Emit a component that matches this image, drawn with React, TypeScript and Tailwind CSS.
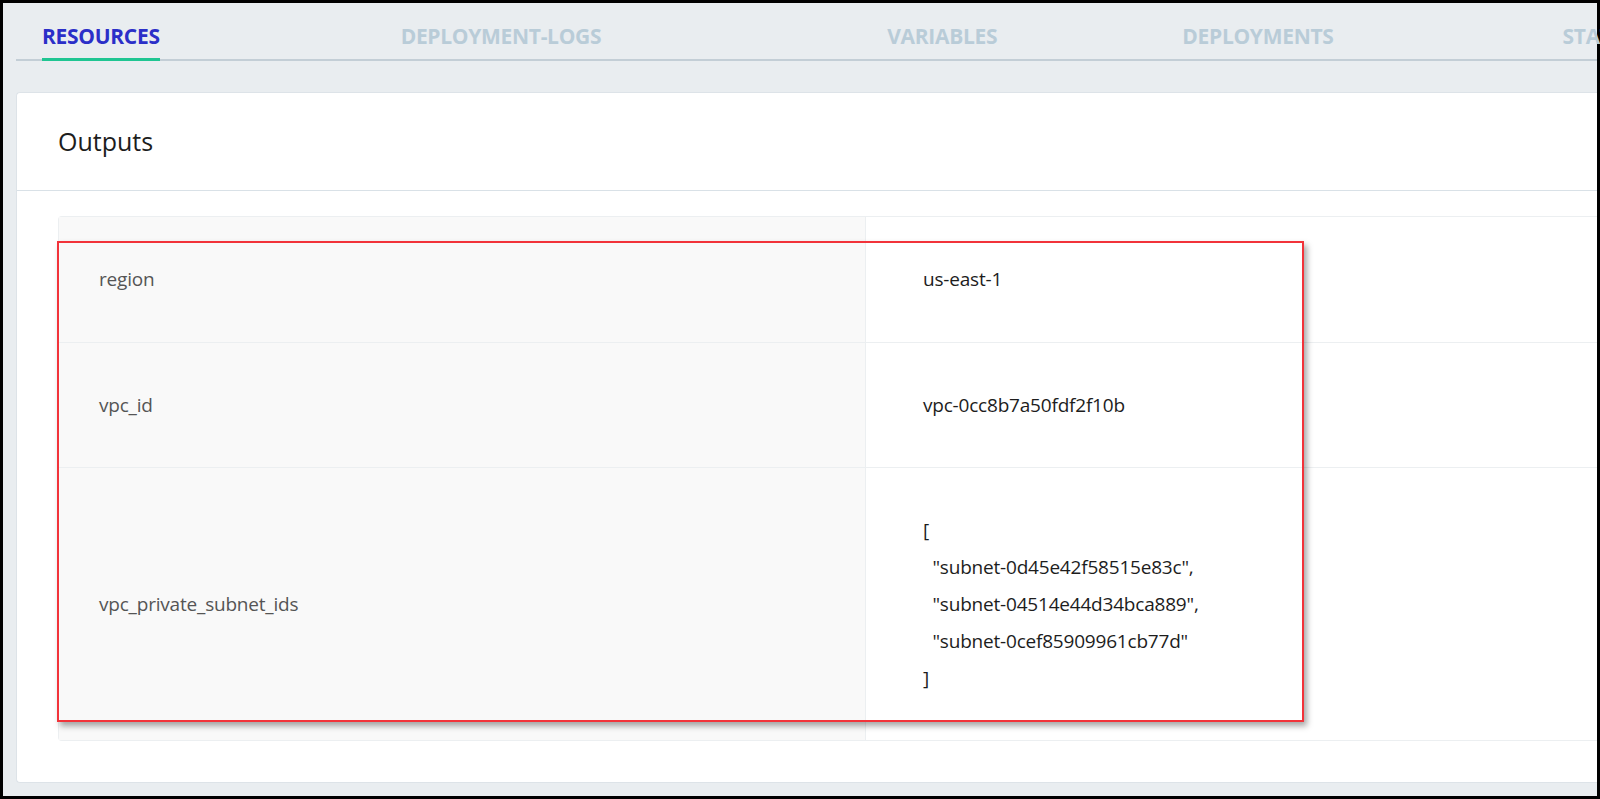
export default function App() {
  const tabs: [string, number][] = [["RESOURCES",0],["DEPLOYMENT-LOGS",241],["VARIABLES",527],["DEPLOYMENTS",712],["STATES",941],["COST",1082],["ACCESS",1201],["SETTINGS",1350]];
  return (
    <div className="w-[1600px] h-[799px] bg-black p-[3px] overflow-hidden" style={{fontFamily:"'Open Sans', Lato, sans-serif"}}>
      <div className="relative w-full h-full bg-[#e9edf0] pl-[13px] flex flex-col">
        <div className="flex border-b-2 border-[#c3ced6] mt-[17px] h-[41px]">
          <div className="flex pl-[26px]">
            {tabs.map(([t,x],i)=>(
              <div key={t} style={i>0?{marginLeft: x - (i===1?0:tabs[i-1][1]) - 0}:undefined} className={`shrink-0 text-[21px] font-bold tracking-[-0.3px] leading-none pt-[6px] h-[41px] ${i===0?"text-[#2b2fc8] border-b-[3px] border-[#1fc592]":"text-[#b9ccd8]"}`}>
                <span>{t}</span>
              </div>
            ))}
          </div>
        </div>
        <div className="mt-[31px] flex-1 mb-[13px] bg-white rounded-l-[4px] border border-[#dde3e8] border-r-0 flex flex-col">
          <div className="h-[98px] border-b border-[#d9e1e7] flex items-center pl-[41px] text-[25px] text-[#1d1d1d]">Outputs</div>
          <div className="mt-[25px] ml-[41px] border border-[#eceff1] border-r-0 rounded-l-[4px] text-[19px]">
            {[
              ["region",["us-east-1"],126],
              ["vpc_id",["vpc-0cc8b7a50fdf2f10b"],126],
              ["vpc_private_subnet_ids",["[",'  "subnet-0d45e42f58515e83c",','  "subnet-04514e44d34bca889",','  "subnet-0cef85909961cb77d"',"]"],274],
            ].map(([k,v,h],i)=>(
              <div key={i} className={`flex ${i>0?"border-t border-[#eceff1]":""}`} style={{height:(h as number)-1}}>
                <div className="w-[807px] shrink-0 bg-[#f9f9f9] border-r border-[#eceff1] flex items-center pl-[40px] text-[#555] tracking-[-0.2px]">{k as string}</div>
                <div className="flex flex-col justify-center pl-[57px] text-[#1d1d1d] tracking-[-0.2px]">
                  {(v as string[]).map((l,j)=><div key={j} className="whitespace-pre leading-[37px]">{l}</div>)}
                </div>
              </div>
            ))}
          </div>
        </div>
        <div className="absolute left-[54px] top-[238px] w-[1247px] h-[481px] border-2 border-[#f2333a] shadow-[3px_4px_6px_rgba(0,0,0,0.35)] pointer-events-none" />
      </div>
    </div>
  );
}
